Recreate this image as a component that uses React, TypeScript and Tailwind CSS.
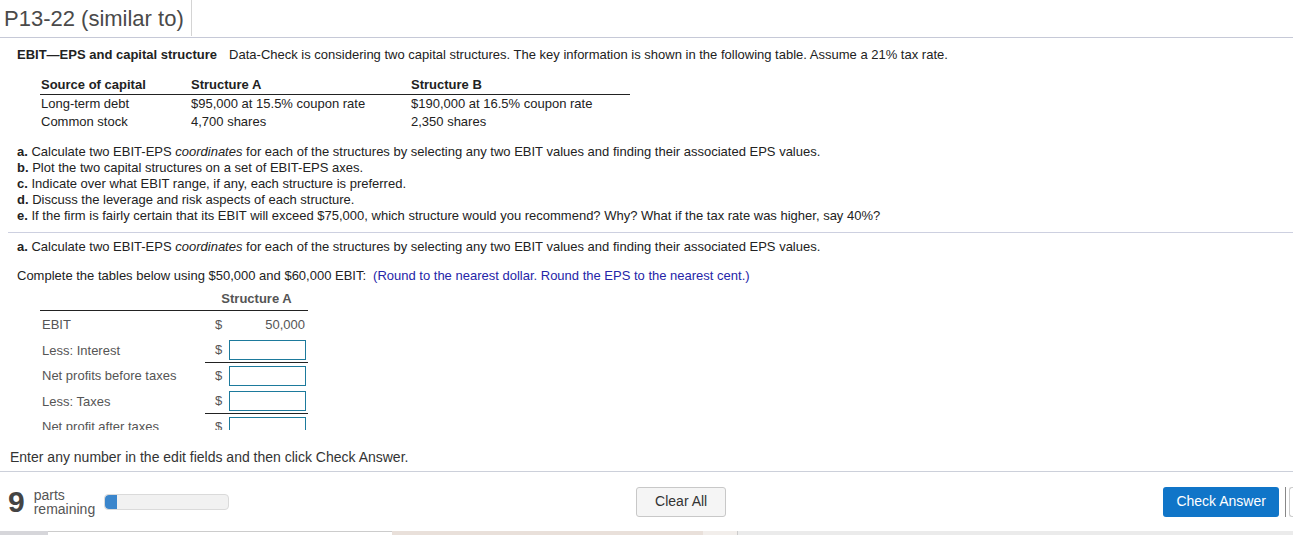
import React from 'react'

const tableRows = [
  { source: 'Long-term debt', a: '$95,000 at 15.5% coupon rate', b: '$190,000 at 16.5% coupon rate' },
  { source: 'Common stock', a: '4,700 shares', b: '2,350 shares' },
]

const parts = [
  { key: 'a.', text: <>Calculate two EBIT-EPS <i>coordinates</i> for each of the structures by selecting any two EBIT values and finding their associated EPS values.</> },
  { key: 'b.', text: <>Plot the two capital structures on a set of EBIT-EPS axes.</> },
  { key: 'c.', text: <>Indicate over what EBIT range, if any, each structure is preferred.</> },
  { key: 'd.', text: <>Discuss the leverage and risk aspects of each structure.</> },
  { key: 'e.', text: <>If the firm is fairly certain that its EBIT will exceed $75,000, which structure would you recommend? Why? What if the tax rate was higher, say 40%?</> },
]

function AnswerBox() {
  return <div className='w-[77px] h-[20px] border border-[#1d7a9c] bg-white' />
}

function CalcRow({ label, h, underline, children }: { label: string; h: string; underline?: boolean; children: React.ReactNode }) {
  return (
    <div className={`flex items-stretch ${h}`}>
      <div className='w-[165px] pl-[2px] flex items-center text-[#555]'>{label}</div>
      <div className={`w-[103px] flex items-center ${underline ? 'border-b-[1.5px] border-[#222]' : ''}`}>
        <span className='w-[24px] pl-[10px] text-[#555]'>$</span>
        {children}
      </div>
    </div>
  )
}

export default function App() {
  return (
    <div className="w-[1293px] h-[535px] bg-white overflow-hidden flex flex-col font-['Liberation_Sans',Arial,sans-serif] text-[#222]">
      {/* header */}
      <div className='h-[38px] shrink-0 border-b border-[#c6c9d7] flex'>
        <div className='w-[192px] h-[36px] border-r border-[#d4d4d4] pl-[4px] flex items-center text-[22px] text-[#4a4a4a]'>
          P13-22 (similar to)
        </div>
      </div>

      {/* question area */}
      <div className='h-[392px] shrink-0 overflow-hidden text-[13px] leading-[16px]'>
        <div className='pt-[9px] pl-[17px]'>
          <b>EBIT—EPS and capital structure</b>
          <span className='ml-[12px]'>Data-Check is considering two capital structures. The key information is shown in the following table. Assume a 21% tax rate.</span>
        </div>

        <div className='ml-[40px] mt-[14px] w-[590px] text-[#222]'>
          <div className='flex h-[18px] border-b border-[#222] font-bold pl-[1px]'>
            <div className='w-[150px]'>Source of capital</div>
            <div className='w-[220px]'>Structure A</div>
            <div>Structure B</div>
          </div>
          {tableRows.map((r) => (
            <div key={r.source} className='flex h-[18px] items-center pl-[1px]'>
              <div className='w-[150px]'>{r.source}</div>
              <div className='w-[220px]'>{r.a}</div>
              <div>{r.b}</div>
            </div>
          ))}
        </div>

        <div className='mt-[13px] pl-[17px]'>
          {parts.map((p) => (
            <div key={p.key}>
              <b>{p.key}</b> {p.text}
            </div>
          ))}
        </div>

        <div className='ml-[8px] mt-[8px] border-t border-[#cdd0e0]' />

        <div className='mt-[6px] pl-[17px]'>
          <b>a.</b> Calculate two EBIT-EPS <i>coordinates</i> for each of the structures by selecting any two EBIT values and finding their associated EPS values.
        </div>

        <div className='mt-[13px] pl-[17px]'>
          Complete the tables below using $50,000 and $60,000 EBIT:
          <span className='ml-[7px] text-[#2525a8]'>(Round to the nearest dollar. Round the EPS to the nearest cent.)</span>
        </div>

        <div className='ml-[40px] mt-[7px] w-[268px]'>
          <div className='h-[20px] border-b-[1.5px] border-[#222] flex'>
            <div className='w-[165px]' />
            <div className='w-[103px] text-center font-bold text-[#555]'>Structure A</div>
          </div>
          <CalcRow label='EBIT' h='h-[27px]'>
            <span className='w-[76px] text-right text-[#555]'>50,000</span>
          </CalcRow>
          <CalcRow label='Less: Interest' h='h-[25px]' underline>
            <AnswerBox />
          </CalcRow>
          <CalcRow label='Net profits before taxes' h='h-[26px]'>
            <AnswerBox />
          </CalcRow>
          <CalcRow label='Less: Taxes' h='h-[25px]' underline>
            <AnswerBox />
          </CalcRow>
          <CalcRow label='Net profit after taxes' h='h-[26px]'>
            <AnswerBox />
          </CalcRow>
        </div>
      </div>

      {/* hint */}
      <div className='h-[42px] shrink-0 border-b border-[#ccd0da] pl-[10px] pt-[19px] text-[14px] leading-[16px] text-[#333]'>
        Enter any number in the edit fields and then click Check Answer.
      </div>

      {/* footer */}
      <div className='h-[59px] shrink-0 flex items-center pl-[8px]'>
        <div className='text-[30px] font-bold text-[#444] leading-none'>9</div>
        <div className='ml-[9px] text-[14px] leading-[14px] text-[#555]'>
          <div>parts</div>
          <div>remaining</div>
        </div>
        <div className='ml-[9px] w-[125px] h-[16px] shrink-0 rounded-[4px] border border-[#dadada] bg-[#f1f1f1] overflow-hidden'>
          <div className='w-[12px] h-full bg-[#3b86cc] rounded-l-[4px]' />
        </div>
        <div className='ml-[407px] w-[90px] h-[30px] shrink-0 rounded-[3px] border border-[#c8c8c8] bg-[#f5f5f5] flex items-center justify-center text-[14px] text-[#333]'>
          Clear All
        </div>
        <div className='ml-[437px] w-[116px] h-[30px] shrink-0 rounded-[3px] bg-[#1075c8] flex items-center justify-center text-[14px] text-white'>
          Check Answer
        </div>
        <div className='ml-[6px] w-px h-[30px] shrink-0 bg-[#888]' />
        <div className='ml-[3px] w-[10px] h-[30px] shrink-0 border-l border-y border-[#ccc] rounded-l-[3px]' />
      </div>

      {/* bottom strip */}
      <div className='h-[4px] shrink-0 flex'>
        <div className='w-[48px] bg-[#d6d6da]' />
        <div className='w-[344px] bg-white border-t border-[#ccc]' />
        <div className='w-[311px] bg-[#e9e0da]' />
        <div className='w-[34px] bg-[#f2eeeb]' />
        <div className='w-px bg-[#ccc]' />
        <div className='flex-1 bg-[#ebebeb]' />
      </div>
    </div>
  )
}
